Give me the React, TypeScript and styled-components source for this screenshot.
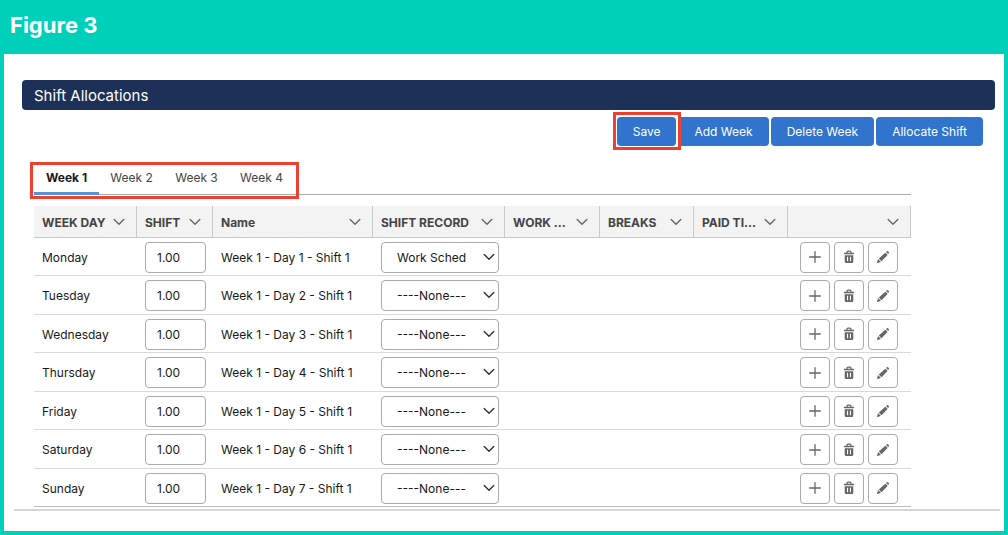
import React, { useState } from "react";
import styled, { createGlobalStyle } from "styled-components";

const colors = {
  teal: "#00cfba",
  navy: "#1d3057",
  blue: "#3074cd",
  tabBlue: "#5592dc",
  red: "#ee4030",
  border: "#aaaaaa",
  line: "#d9d9d9",
  head: "#f3f3f3",
  icon: "#666666",
};

const GlobalStyle = createGlobalStyle`
  * { box-sizing: border-box; }
  body {
    margin: 0;
    background: ${colors.teal};
    font-family: Inter, "Liberation Sans", sans-serif;
    font-size: 12px;
    color: #181818;
  }
  button, input, select { font: inherit; color: inherit; margin: 0; }
`;

const Figure = styled.main`
  display: flex;
  flex-direction: column;
  min-height: 100vh;
  padding: 0 4px 4px;
  background: ${colors.teal};
`;

const FigureTitle = styled.h1`
  margin: 0;
  padding: 9px 6px 13px;
  font-size: 22px;
  line-height: 32px;
  font-weight: 700;
  color: #fff;
`;

const Panel = styled.section`
  flex: 1;
  background: #fff;
  padding: 26px 4px 20px 10px;
`;

const PanelBody = styled.div`
  padding: 0 5px 0 8px;
`;

const SectionTitle = styled.h2`
  margin: 0;
  padding: 1px 12px 0;
  border-radius: 4px;
  background: ${colors.navy};
  color: #fff;
  font-size: 15px;
  font-weight: 400;
  line-height: 29px;
`;

const Toolbar = styled.div`
  display: flex;
  justify-content: flex-end;
  gap: 2px;
  padding: 7px 12px 0 0;
`;

const Action = styled.button<{ $marked?: boolean }>`
  position: relative;
  z-index: ${(p) => (p.$marked ? 1 : 0)};
  height: 29px;
  padding: 0 16px;
  border: 0;
  border-radius: 4px;
  background: ${colors.blue};
  color: #fff;
  line-height: 29px;
  white-space: nowrap;
  &::after {
    content: "";
    display: ${(p) => (p.$marked ? "block" : "none")};
    position: absolute;
    inset: -5px -5px -4px -4px;
    border: 3px solid ${colors.red};
  }
`;

const Schedule = styled.div`
  margin: 16px 84px 0 12px;
`;

const Tabs = styled.div`
  display: flex;
  border-bottom: 1px solid ${colors.border};
`;

const TabGroup = styled.div`
  position: relative;
  display: flex;
  &::after {
    content: "";
    position: absolute;
    inset: 0 -5px -5px -4px;
    border: 3px solid ${colors.red};
    pointer-events: none;
  }
`;

const Tab = styled.button<{ $active: boolean }>`
  width: 65px;
  height: 32px;
  padding: 0 0 2px;
  border: 0;
  background: none;
  color: ${(p) => (p.$active ? "#181818" : "#444")};
  font-weight: ${(p) => (p.$active ? 700 : 400)};
  box-shadow: ${(p) => (p.$active ? `0 1px ${colors.tabBlue}, inset 0 -2px ${colors.tabBlue}` : "none")};
`;

const Grid = styled.table`
  width: 100%;
  margin-top: 11px;
  table-layout: fixed;
  border-collapse: separate;
  border-spacing: 0;
`;

const Col = styled.col<{ $w?: number }>`
  width: ${(p) => (p.$w ? `${p.$w}px` : "auto")};
`;

const HeadCell = styled.th`
  height: 32px;
  padding: 0 11px 0 8px;
  border-right: 1px solid #c9c9c9;
  border-bottom: 1px solid #c9c9c9;
  background: ${colors.head};
  text-align: left;
  font-weight: 700;
  color: #444;
  white-space: nowrap;
`;

const HeadContent = styled.div`
  display: flex;
  align-items: center;
  justify-content: space-between;
  padding-top: 1px;
`;

const Row = styled.tr`
  height: 38px;
  &:nth-child(even) { height: 39px; }
  &:last-child > td { border-bottom-color: #bbb; }
`;

const Cell = styled.td`
  padding: 1px 0 0 8px;
  border-bottom: 1px solid ${colors.line};
  white-space: nowrap;
`;

const ShiftInput = styled.input`
  display: block;
  width: 61px;
  height: 31px;
  padding: 0 11px;
  border: 1px solid ${colors.border};
  border-radius: 4px;
  background: #fff;
`;

const Picker = styled.div`
  position: relative;
  width: 118px;
  svg { position: absolute; right: 4px; top: 11px; pointer-events: none; }
`;

const Select = styled.select`
  display: block;
  appearance: none;
  width: 100%;
  height: 31px;
  padding: 0 32px 0 15px;
  border: 1px solid ${colors.border};
  border-radius: 4px;
  background: #fff;
  text-overflow: clip;
`;

const RowActions = styled.div`
  display: flex;
  justify-content: flex-end;
  gap: 4px;
  padding-right: 13px;
`;

const IconButton = styled.button`
  display: flex;
  align-items: center;
  justify-content: center;
  width: 30px;
  height: 31px;
  padding: 0;
  border: 1px solid ${colors.border};
  border-radius: 4px;
  background: #fff;
  color: ${colors.icon};
`;

const Footline = styled.hr`
  height: 2px;
  margin: 2px 0 0;
  border: 0;
  background: #d6d6d6;
`;

const Chevron = ({ dark }: { dark?: boolean }) => (
  <svg width="12" height="8" viewBox="0 0 12 8" fill="none" stroke={dark ? "#333" : "#666"} strokeWidth="1.4" strokeLinecap="round" strokeLinejoin="round" aria-hidden="true">
    <path d="M1.2 1.5 6 6.3 10.8 1.5" />
  </svg>
);

const PlusIcon = () => (
  <svg width="12" height="12" viewBox="0 0 12 12" stroke="currentColor" strokeWidth="1.3" strokeLinecap="round" aria-hidden="true">
    <path d="M6 .7v10.6M.7 6h10.6" />
  </svg>
);

const TrashIcon = () => (
  <svg width="12" height="14" viewBox="0 0 12 14" aria-hidden="true">
    <path d="M4 3V2.2Q4 1.2 5 1.2h2Q8 1.2 8 2.2V3" fill="none" stroke="currentColor" strokeWidth="1.2" />
    <rect x=".8" y="2.7" width="10.4" height="1.6" rx=".7" fill="currentColor" />
    <path fillRule="evenodd" fill="currentColor" d="M1.7 5.3h8.6v6.2q0 1.5-1.5 1.5H3.2q-1.5 0-1.5-1.5ZM4 6.8v4.4h1.1V6.8Zm2.9 0v4.4H8V6.8Z" />
  </svg>
);

const PencilIcon = () => (
  <svg width="14" height="14" viewBox="0 0 14 14" fill="currentColor" aria-hidden="true">
    <path d="M1.1 12.3 1.9 9.5Q2.1 9 2.5 9.4L4.6 11.5Q5 11.9 4.5 12.1L1.7 12.9Q.9 13.1 1.1 12.3Z" />
    <path d="M3.1 8.2 9 2.9Q9.3 2.6 9.6 2.9L11.3 4.6Q11.6 4.9 11.3 5.2L5.8 10.9Q5.5 11.2 5.2 10.9L3.1 8.8Q2.8 8.5 3.1 8.2Z" />
    <path d="M10.3 1.8 10.8 1.3Q11.4.8 12 1.3L12.8 2.1Q13.3 2.7 12.8 3.3L12.3 3.8Q12 4 11.8 3.8L10.3 2.3Q10.1 2 10.3 1.8Z" />
  </svg>
);

const weeks = ["Week 1", "Week 2", "Week 3", "Week 4"];
const days = ["Monday", "Tuesday", "Wednesday", "Thursday", "Friday", "Saturday", "Sunday"];
const columns: { label: string; width?: number }[] = [
  { label: "WEEK DAY", width: 103 },
  { label: "SHIFT", width: 76 },
  { label: "Name" },
  { label: "SHIFT RECORD", width: 132 },
  { label: "WORK ...", width: 95 },
  { label: "BREAKS", width: 94 },
  { label: "PAID TI...", width: 94 },
  { label: "", width: 123 },
];

export default function App() {
  const [week, setWeek] = useState(0);
  return (
    <>
      <GlobalStyle />
      <Figure>
        <FigureTitle>Figure 3</FigureTitle>
        <Panel>
          <PanelBody>
            <SectionTitle>Shift Allocations</SectionTitle>
            <Toolbar>
              <Action type="button" $marked>Save</Action>
              <Action type="button">Add Week</Action>
              <Action type="button">Delete Week</Action>
              <Action type="button">Allocate Shift</Action>
            </Toolbar>
            <Schedule>
              <Tabs>
                <TabGroup role="tablist">
                  {weeks.map((label, i) => (
                    <Tab key={label} type="button" role="tab" aria-selected={i === week} $active={i === week} onClick={() => setWeek(i)}>
                      {label}
                    </Tab>
                  ))}
                </TabGroup>
              </Tabs>
              <Grid>
                <colgroup>
                  {columns.map((c, i) => <Col key={i} $w={c.width} />)}
                </colgroup>
                <thead>
                  <tr>
                    {columns.map((c, i) => (
                      <HeadCell key={i} scope="col">
                        <HeadContent>
                          <span>{c.label}</span>
                          <Chevron />
                        </HeadContent>
                      </HeadCell>
                    ))}
                  </tr>
                </thead>
                <tbody>
                  {days.map((day, i) => (
                    <Row key={day}>
                      <Cell>{day}</Cell>
                      <Cell><ShiftInput aria-label={`${day} shift`} defaultValue="1.00" /></Cell>
                      <Cell>{`Week ${week + 1} - Day ${i + 1} - Shift 1`}</Cell>
                      <Cell>
                        <Picker>
                          <Select aria-label={`${day} shift record`} defaultValue={i === 0 ? "work" : "none"}>
                            <option value="none">----None----</option>
                            <option value="work">Work Schedule</option>
                          </Select>
                          <Chevron dark />
                        </Picker>
                      </Cell>
                      <Cell />
                      <Cell />
                      <Cell />
                      <Cell>
                        <RowActions>
                          <IconButton type="button" aria-label={`Add shift on ${day}`}><PlusIcon /></IconButton>
                          <IconButton type="button" aria-label={`Delete ${day}`}><TrashIcon /></IconButton>
                          <IconButton type="button" aria-label={`Edit ${day}`}><PencilIcon /></IconButton>
                        </RowActions>
                      </Cell>
                    </Row>
                  ))}
                </tbody>
              </Grid>
            </Schedule>
          </PanelBody>
          <Footline />
        </Panel>
      </Figure>
    </>
  );
}
